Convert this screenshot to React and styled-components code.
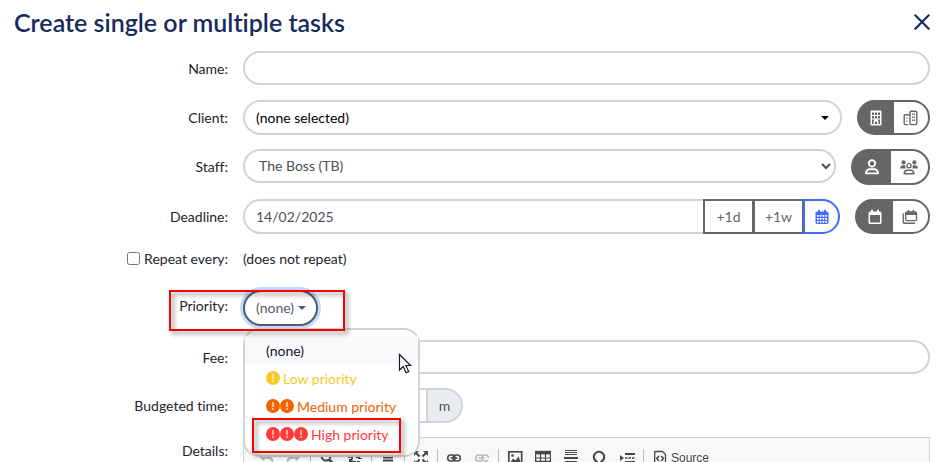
import { useState } from "react";
import styled, { createGlobalStyle, css } from "styled-components";

const GlobalStyle = createGlobalStyle`
    *, *::before, *::after {
        box-sizing: border-box;
    }
    body {
        margin: 0;
        background: #fff;
        color: #212529;
        font-family: Lato, "Liberation Sans", sans-serif;
        font-size: 14px;
        font-variant-ligatures: none;
        line-height: 21px;
        overflow: hidden;
    }
    button, input, select {
        font: inherit;
        margin: 0;
    }
`;

const Page = styled.main`
    padding: 7px 9px 0 0;
`;

const Header = styled.header`
    display: flex;
    align-items: center;
    justify-content: space-between;
    padding-left: 14px;
    margin-bottom: 14px;
`;

const Title = styled.h1`
    margin: 0;
    color: #172b5c;
    font-size: 25px;
    font-weight: 600;
    line-height: 30px;
`;

const CloseButton = styled.button`
    display: flex;
    padding: 0;
    border: 0;
    background: none;
    color: #172b5c;
    cursor: pointer;
`;

const Form = styled.form`
    display: flex;
    flex-direction: column;
    gap: 14px;
`;

const Row = styled.div`
    position: relative;
    display: grid;
    grid-template-columns: 228px minmax(0, 1fr);
    column-gap: 15px;
    align-items: start;
    min-height: ${(props) => props.$minHeight || "34px"};
`;

const Label = styled.label`
    padding-top: ${(props) => props.$top || "7px"};
    text-align: right;
`;

const CheckLabel = styled(Label)`
    display: flex;
    align-items: center;
    justify-content: flex-end;
    gap: 4px;
`;

const Checkbox = styled.input`
    width: 13px;
    height: 13px;
`;

const Field = styled.div`
    display: flex;
    align-items: flex-start;
    gap: 15px;
`;

const control = css`
    flex: 1;
    min-width: 0;
    height: ${(props) => props.$height || "34px"};
    border: 2px solid #ced4da;
    border-radius: 18px;
    background: #fff;
    color: #495057;
    outline: none;
`;

const TextInput = styled.input`
    ${control}
    width: 100%;
    padding: 0 11px;
`;

const Select = styled.select`
    ${control}
    padding: 0 0 2px 10px;
`;

const Combo = styled.button`
    ${control}
    display: flex;
    align-items: center;
    justify-content: space-between;
    padding: 0 11px;
    color: #000;
`;

const Caret = styled.span`
    border-top: 4px solid currentColor;
    border-left: 4px solid transparent;
    border-right: 4px solid transparent;
`;

const Toggle = styled.div`
    display: flex;
    width: ${(props) => props.$width};
    height: ${(props) => props.$height || "35px"};
    border: 2px solid #666;
    border-radius: 18px;
    background: #666;
    overflow: hidden;
`;

const ToggleButton = styled.button`
    display: flex;
    flex: 1;
    align-items: center;
    justify-content: center;
    padding: 0;
    border: 0;
    background: ${(props) => (props.$active ? "#666" : "#fff")};
    color: ${(props) => (props.$active ? "#fff" : "#666")};
    cursor: pointer;
`;

const InputGroup = styled.div`
    display: flex;
    flex: ${(props) => (props.$width ? "none" : "1")};
    width: ${(props) => props.$width || "auto"};
    min-width: 0;
`;

const GroupInput = styled(TextInput)`
    border-radius: ${(props) => (props.$first ? "18px 0 0 18px" : "0")};
    border-right: 0;
`;

const GroupButton = styled.button`
    display: flex;
    align-items: center;
    justify-content: center;
    width: ${(props) => props.$width || "51px"};
    height: 35px;
    padding: 0;
    margin-right: ${(props) => (props.$last ? "0" : "-1px")};
    border: 2px solid ${(props) => (props.$last ? "#3f6bff" : "#666")};
    border-radius: ${(props) => (props.$last ? "0 18px 18px 0" : "0")};
    background: #fff;
    color: ${(props) => (props.$last ? "#3f6bff" : "#666")};
    cursor: pointer;
`;

const Addon = styled.span`
    display: flex;
    flex: none;
    align-items: center;
    justify-content: center;
    width: 37px;
    height: 35px;
    border: 2px solid #ced4da;
    border-radius: 0 18px 18px 0;
    background: #e9ecef;
    color: #495057;
`;

const Dropdown = styled.div`
    position: relative;
`;

const DropdownButton = styled.button`
    display: flex;
    align-items: center;
    gap: 4px;
    height: 36px;
    padding: 0 10px 1px 11px;
    border: 2px solid #545b62;
    border-radius: 18px;
    background: #fff;
    color: #545b62;
    box-shadow: 0 0 0 3px #bfdbff;
    outline: none;
    cursor: pointer;
`;

const Menu = styled.ul`
    position: absolute;
    top: 38px;
    left: 0;
    z-index: 2;
    width: 177px;
    margin: 0;
    padding: 6px 0 7px;
    border: 2px solid #d3d4d5;
    border-radius: 16px;
    background: #fff;
    list-style: none;
`;

const MenuItem = styled.li`
    position: relative;
`;

const MenuButton = styled.button`
    display: flex;
    align-items: center;
    width: 100%;
    height: 28px;
    padding: 0 21px;
    border: 0;
    background: ${(props) => (props.$active ? "#f8f9fa" : "transparent")};
    color: ${(props) => props.$color || "#16181b"};
    white-space: nowrap;
    cursor: pointer;
`;

const Marks = styled.span`
    display: flex;
    margin-right: 3px;
`;

const Highlight = styled.span`
    position: absolute;
    top: ${(props) => props.$top};
    left: ${(props) => props.$left};
    z-index: 3;
    width: ${(props) => props.$width};
    height: ${(props) => props.$height};
    border: 2px solid #f60000;
    filter: drop-shadow(3px 3px 2px rgba(0, 0, 0, 0.45));
    pointer-events: none;
`;

const Pointer = styled.svg`
    position: absolute;
    top: 17px;
    right: 6px;
    z-index: 4;
    pointer-events: none;
`;

const Editor = styled.div`
    border: 1px solid #d1d1d1;
`;

const Toolbar = styled.div`
    display: flex;
    align-items: center;
    padding: 8px;
    background: #f8f8f8;
`;

const ToolGroup = styled.div`
    display: flex;
    align-items: center;

    & + &::before {
        content: "";
        width: 1px;
        height: 18px;
        margin: 0 2px;
        background: #bcbcbc;
    }
`;

const ToolButton = styled.button`
    display: flex;
    align-items: center;
    gap: 3px;
    height: 24px;
    padding: 0 6px;
    border: 0;
    background: none;
    color: #484848;
    font-family: "Liberation Sans", Arial, sans-serif;
    font-size: 12px;
    opacity: ${(props) => (props.disabled ? "0.35" : "1")};
`;

function CloseIcon() {
    return (
        <svg width="16" height="16" viewBox="0 0 16 16" stroke="currentColor" strokeWidth="2.2" strokeLinecap="round">
            <path d="M1.3 1.3l13.4 13.4M14.7 1.3L1.3 14.7" />
        </svg>
    );
}

function BuildingIcon() {
    return (
        <svg width="12" height="16" viewBox="0 0 12 16" fill="currentColor">
            <path
                fillRule="evenodd"
                d="M1.800.500h8.400q1.300 0 1.300 1.300v12.400q0 1.300-1.300 1.300H1.800Q.500 15.500.500 14.200V1.800Q.500.500 1.800.500zM2 2.500v2.400h2V2.500zM5 2.500v2.400h2V2.500zM8 2.500v2.400h2V2.500zM2 6v2.400h2V6zM5 6v2.400h2V6zM8 6v2.400h2V6zM2 9.400V14h1.600v-2.500q0-1.500 1.200-2.100zM7.200 9.400q1.200.6 1.200 2.100V14H10V9.400zM5 11.700V14h2v-2.300q-1-1-2 0z"
            />
        </svg>
    );
}

function BuildingsIcon() {
    return (
        <svg width="15" height="16" viewBox="0 0 15 16" fill="none" stroke="currentColor">
            <rect x="7" y="1.2" width="6.8" height="13.4" rx="1.4" strokeWidth="1.4" />
            <path d="M7 4.8H2.4Q1.2 4.8 1.2 6v7.4q0 1.2 1.2 1.2H5.6" strokeWidth="1.4" />
            <path d="M9.6 3.6v1.4M11.4 3.6v1.4M9.6 6.6v1.4M11.4 6.6v1.4M9.6 9.6V11M11.4 9.6V11M3.9 7.4v1.4M3.9 10.4v1.4" strokeWidth="1.2" />
        </svg>
    );
}

function UserIcon() {
    return (
        <svg width="14" height="16" viewBox="0 0 14 16" fill="none" stroke="currentColor" strokeWidth="1.9">
            <circle cx="7" cy="4.4" r="3.2" />
            <path d="M4.8 10.200h4.400a3.800 3.800 0 0 1 3.800 3.800v.400H1v-.400a3.800 3.800 0 0 1 3.800-3.800z" strokeLinejoin="round" />
        </svg>
    );
}

function UsersIcon() {
    return (
        <svg width="18" height="15" viewBox="0 0 18 15" fill="currentColor">
            <circle cx="3.6" cy="2.4" r="2.1" />
            <circle cx="14.4" cy="2.4" r="2.1" />
            <path d="M.2 8.400q0-3.200 2.800-3.200h1.600l.9.200q-.6 1.700.2 3zM17.800 8.400q0-3.200-2.800-3.200h-1.600l-.9.200q.6 1.700-.2 3z" />
            <circle cx="9" cy="5.8" r="2.1" fill="none" stroke="currentColor" strokeWidth="1.3" />
            <path d="M7.200 10.200h3.600q3 .2 3 3.600H4.200q0-3.400 3-3.600z" fill="none" stroke="currentColor" strokeWidth="1.500" strokeLinejoin="round" />
        </svg>
    );
}

function CalendarGridIcon() {
    return (
        <svg width="14" height="16" viewBox="0 0 14 16">
            <path d="M4 1.500v2M10 1.500v2" stroke="currentColor" strokeWidth="1.800" strokeLinecap="round" />
            <rect x="0.5" y="2.500" width="13" height="12.500" rx="1.800" fill="currentColor" />
            <path d="M2 6.900h10M2 9.900h10M2 12.800h10" stroke="#fff" strokeWidth="1.700" strokeDasharray="1.800 0.930" />
        </svg>
    );
}

function CalendarIcon() {
    return (
        <svg width="14" height="16" viewBox="0 0 14 16">
            <path d="M4 1.500v2M10 1.500v2" stroke="currentColor" strokeWidth="1.800" strokeLinecap="round" />
            <path
                fillRule="evenodd"
                d="M2 2.500h10a1.500 1.500 0 0 1 1.500 1.500v9.500A1.500 1.500 0 0 1 12 15H2A1.500 1.500 0 0 1 .5 13.500V4A1.500 1.500 0 0 1 2 2.500zM2 6v7q0 .5.5.5h9q.5 0 .5-.5V6z"
                fill="currentColor"
            />
        </svg>
    );
}

function CalendarsIcon() {
    return (
        <svg width="16" height="16" viewBox="0 0 16 16" fill="none" stroke="currentColor">
            <path d="M6.600 1.500v2M11.400 1.500v2" strokeWidth="1.600" strokeLinecap="round" />
            <rect x="3.700" y="3" width="10.800" height="8.600" rx="1.300" strokeWidth="1.400" />
            <path d="M3.700 4.600h10.800" strokeWidth="2.600" />
            <path d="M1.200 5v7.400q0 1.900 1.900 1.900h9.400" strokeWidth="1.400" strokeLinecap="round" />
        </svg>
    );
}

function Exclamation() {
    return (
        <svg width="14" height="14" viewBox="0 0 14 14">
            <circle cx="7" cy="7" r="7" fill="currentColor" />
            <path d="M7 3.500v4" stroke="#fff" strokeWidth="1.500" strokeLinecap="round" opacity="0.8" />
            <circle cx="7" cy="10" r="0.900" fill="#fff" opacity="0.8" />
        </svg>
    );
}

const toolDrawings = {
    Undo: <path d="M1 6l5-5v3q8 0 9 8-3-4-9-4v3z" fill="currentColor" />,
    Redo: <path d="M15 6l-5-5v3q-8 0-9 8 3-4 9-4v3z" fill="currentColor" />,
    Find: (
        <>
            <circle cx="7" cy="6" r="4.500" strokeWidth="2" />
            <path d="M10 9.500l5 5" strokeWidth="3" />
        </>
    ),
    Replace: <path d="M2 8q0-2 2-2h1v6M2 10h3M9 7h2M12 2v7M14 4v5M2 12h12" strokeWidth="2" strokeDasharray="3 1" />,
    "Select All": <path d="M1 1.500h14M1 14.500h14M3 4.500h10M3 7.500h10M3 10.500h10" strokeWidth="2" />,
    Maximize: (
        <>
            <path d="M2 2l4.500 4.500M14 2L9.500 6.500M2 14l4.500-4.500M14 14L9.500 9.500" strokeWidth="2" />
            <path d="M1 1h5L1 6zM15 1h-5l5 5zM1 15h5l-5-5zM15 15h-5l5-5z" fill="currentColor" stroke="none" />
        </>
    ),
    Link: (
        <>
            <rect x="1.700" y="5" width="7.300" height="6" rx="3" strokeWidth="1.600" />
            <rect x="7" y="5" width="7.300" height="6" rx="3" strokeWidth="1.600" />
            <path d="M4.500 8h7" strokeWidth="1.500" />
        </>
    ),
    Unlink: (
        <>
            <rect x="1.700" y="5" width="7.300" height="6" rx="3" strokeWidth="1.600" />
            <path d="M7.500 6.500Q8 5 10 5h1.500q3 0 3 3M4.500 8h6M10 10l4 4M14 10l-4 4" strokeWidth="1.500" />
        </>
    ),
    Image: (
        <>
            <rect x="1.800" y="1.800" width="12.900" height="12.400" strokeWidth="1.700" />
            <path d="M3 13l3-4.500 2.500 2 3-4L14 13z" fill="currentColor" stroke="none" />
            <circle cx="5.500" cy="5.500" r="1.300" fill="currentColor" stroke="none" />
        </>
    ),
    Table: (
        <>
            <path d="M0 .800h16v3.600H0z" fill="currentColor" stroke="none" />
            <path d="M.600 2v12.400h14.800V2M0 8h16M0 11.400h16M5.500 4v10.500M10.500 4v10.500" strokeWidth="1.200" />
        </>
    ),
    "Horizontal Line": (
        <>
            <path d="M2 .500h12M2 2.500h12M2 4.500h12M2 11.500h12M2 13.500h12" strokeWidth="1" />
            <path d="M1 8h14" strokeWidth="2" />
        </>
    ),
    "Special Character": <path d="M2 14h4v-2.200Q2.800 10 2.800 7a5.200 5.200 0 0 1 10.400 0q0 3-3.200 4.800V14h4" strokeWidth="2" />,
    "Page Break": (
        <>
            <path d="M1 5l4 3-4 3z" fill="currentColor" stroke="none" />
            <path d="M6 4h10M6 12h10" strokeWidth="2" />
            <path d="M6 8h10" strokeWidth="1.400" strokeDasharray="2.500 1" />
        </>
    ),
    Source: (
        <>
            <path d="M2.700 1.500h7.800l3 3v10H2.700z" strokeWidth="1.300" strokeLinejoin="round" />
            <path d="M7 6L4.800 8.500 7 11M9.200 6l2.200 2.500L9.200 11" strokeWidth="1.600" />
        </>
    ),
};

const toolGroups = [
    ["Undo", "Redo"],
    ["Find", "Replace"],
    ["Select All"],
    ["Maximize"],
    ["Link", "Unlink"],
    ["Image", "Table", "Horizontal Line", "Special Character", "Page Break"],
    ["Source"],
];

const disabledTools = ["Undo", "Redo", "Unlink"];

const priorities = [
    { text: "(none)", marks: 0 },
    { text: "Low priority", marks: 1, color: "#f7c928" },
    { text: "Medium priority", marks: 2, color: "#f06400" },
    { text: "High priority", marks: 3, color: "#ff3b3b", highlighted: true },
];

function SplitToggle({ label, left, right, width, height }) {
    const [active, setActive] = useState("left");

    return (
        <Toggle role="group" aria-label={label} $width={width} $height={height}>
            <ToggleButton type="button" aria-label={label + " single"} $active={active === "left"} onClick={() => setActive("left")}>
                {left}
            </ToggleButton>
            <ToggleButton type="button" aria-label={label + " multiple"} $active={active === "right"} onClick={() => setActive("right")}>
                {right}
            </ToggleButton>
        </Toggle>
    );
}

function PriorityDropdown() {
    const [open, setOpen] = useState(true);
    const [selected, setSelected] = useState("(none)");

    const choose = (text) => {
        setSelected(text);
        setOpen(false);
    };

    return (
        <Dropdown>
            <DropdownButton id="priority" type="button" aria-expanded={open} onClick={() => setOpen(!open)}>
                {selected}
                <Caret />
            </DropdownButton>
            {open && (
                <Menu>
                    {priorities.map((item) => (
                        <MenuItem key={item.text}>
                            <MenuButton type="button" $active={item.text === selected} $color={item.color} onClick={() => choose(item.text)}>
                                {item.marks > 0 && (
                                    <Marks>
                                        {Array.from({ length: item.marks }, (_, i) => <Exclamation key={i} />)}
                                    </Marks>
                                )}
                                {item.text}
                            </MenuButton>
                            {item.text === selected && (
                                <Pointer width="14" height="22" viewBox="0 0 14 22">
                                    <path d="M1.500 1.500v15.500l3.700-3.500 2.800 6.300 2.700-1.200-2.800-6.100h4.700z" fill="#fff" stroke="#111827" strokeWidth="1.200" />
                                </Pointer>
                            )}
                            {item.highlighted && <Highlight $top="-2px" $left="7px" $width="149px" $height="35px" />}
                        </MenuItem>
                    ))}
                </Menu>
            )}
        </Dropdown>
    );
}

function EditorToolbar() {
    return (
        <Toolbar role="toolbar" aria-label="Editor toolbar">
            {toolGroups.map((group) => (
                <ToolGroup key={group[0]}>
                    {group.map((tool) => (
                        <ToolButton key={tool} type="button" aria-label={tool} disabled={disabledTools.includes(tool)}>
                            <svg width="16" height="16" viewBox="0 0 16 16" fill="none" stroke="currentColor">
                                {toolDrawings[tool]}
                            </svg>
                            {tool === "Source" && "Source"}
                        </ToolButton>
                    ))}
                </ToolGroup>
            ))}
        </Toolbar>
    );
}

function App() {
    return (
        <>
            <GlobalStyle />
            <Page>
                <Header>
                    <Title>Create single or multiple tasks</Title>
                    <CloseButton type="button" aria-label="Close">
                        <CloseIcon />
                    </CloseButton>
                </Header>

                <Form onSubmit={(e) => e.preventDefault()}>
                    <Row $minHeight="35px">
                        <Label htmlFor="name">Name:</Label>
                        <TextInput id="name" type="text" />
                    </Row>

                    <Row>
                        <Label htmlFor="client">Client:</Label>
                        <Field>
                            <Combo id="client" type="button" $height="35px">
                                (none selected)
                                <Caret />
                            </Combo>
                            <SplitToggle label="Client" width="73px" left={<BuildingIcon />} right={<BuildingsIcon />} />
                        </Field>
                    </Row>

                    <Row>
                        <Label htmlFor="staff">Staff:</Label>
                        <Field>
                            <Select id="staff" defaultValue="TB">
                                <option value="TB">The Boss (TB)</option>
                            </Select>
                            <SplitToggle label="Staff" width="79px" height="36px" left={<UserIcon />} right={<UsersIcon />} />
                        </Field>
                    </Row>

                    <Row>
                        <Label htmlFor="deadline">Deadline:</Label>
                        <Field>
                            <InputGroup>
                                <GroupInput id="deadline" type="text" defaultValue="14/02/2025" $first $height="35px" />
                                <GroupButton type="button">+1d</GroupButton>
                                <GroupButton type="button">+1w</GroupButton>
                                <GroupButton type="button" aria-label="Pick a date" $width="37px" $last>
                                    <CalendarGridIcon />
                                </GroupButton>
                            </InputGroup>
                            <SplitToggle label="Deadline" width="75px" left={<CalendarIcon />} right={<CalendarsIcon />} />
                        </Field>
                    </Row>

                    <Row $minHeight="28px">
                        <CheckLabel $top="0">
                            <Checkbox type="checkbox" />
                            Repeat every:
                        </CheckLabel>
                        <span>(does not repeat)</span>
                    </Row>

                    <Row>
                        <Label htmlFor="priority" $top="5px">Priority:</Label>
                        <PriorityDropdown />
                        <Highlight $top="0" $left="169px" $width="176px" $height="41px" />
                    </Row>

                    <Row>
                        <Label htmlFor="fee">Fee:</Label>
                        <TextInput id="fee" type="text" />
                    </Row>

                    <Row>
                        <Label htmlFor="hours">Budgeted time:</Label>
                        <InputGroup $width="220px">
                            <GroupInput id="hours" type="text" $first $height="35px" />
                            <GroupInput type="text" aria-label="Minutes" $height="35px" />
                            <Addon>m</Addon>
                        </InputGroup>
                    </Row>

                    <Row>
                        <Label as="span" $top="3px">Details:</Label>
                        <Editor>
                            <EditorToolbar />
                        </Editor>
                    </Row>
                </Form>
            </Page>
        </>
    );
}

export default App;
